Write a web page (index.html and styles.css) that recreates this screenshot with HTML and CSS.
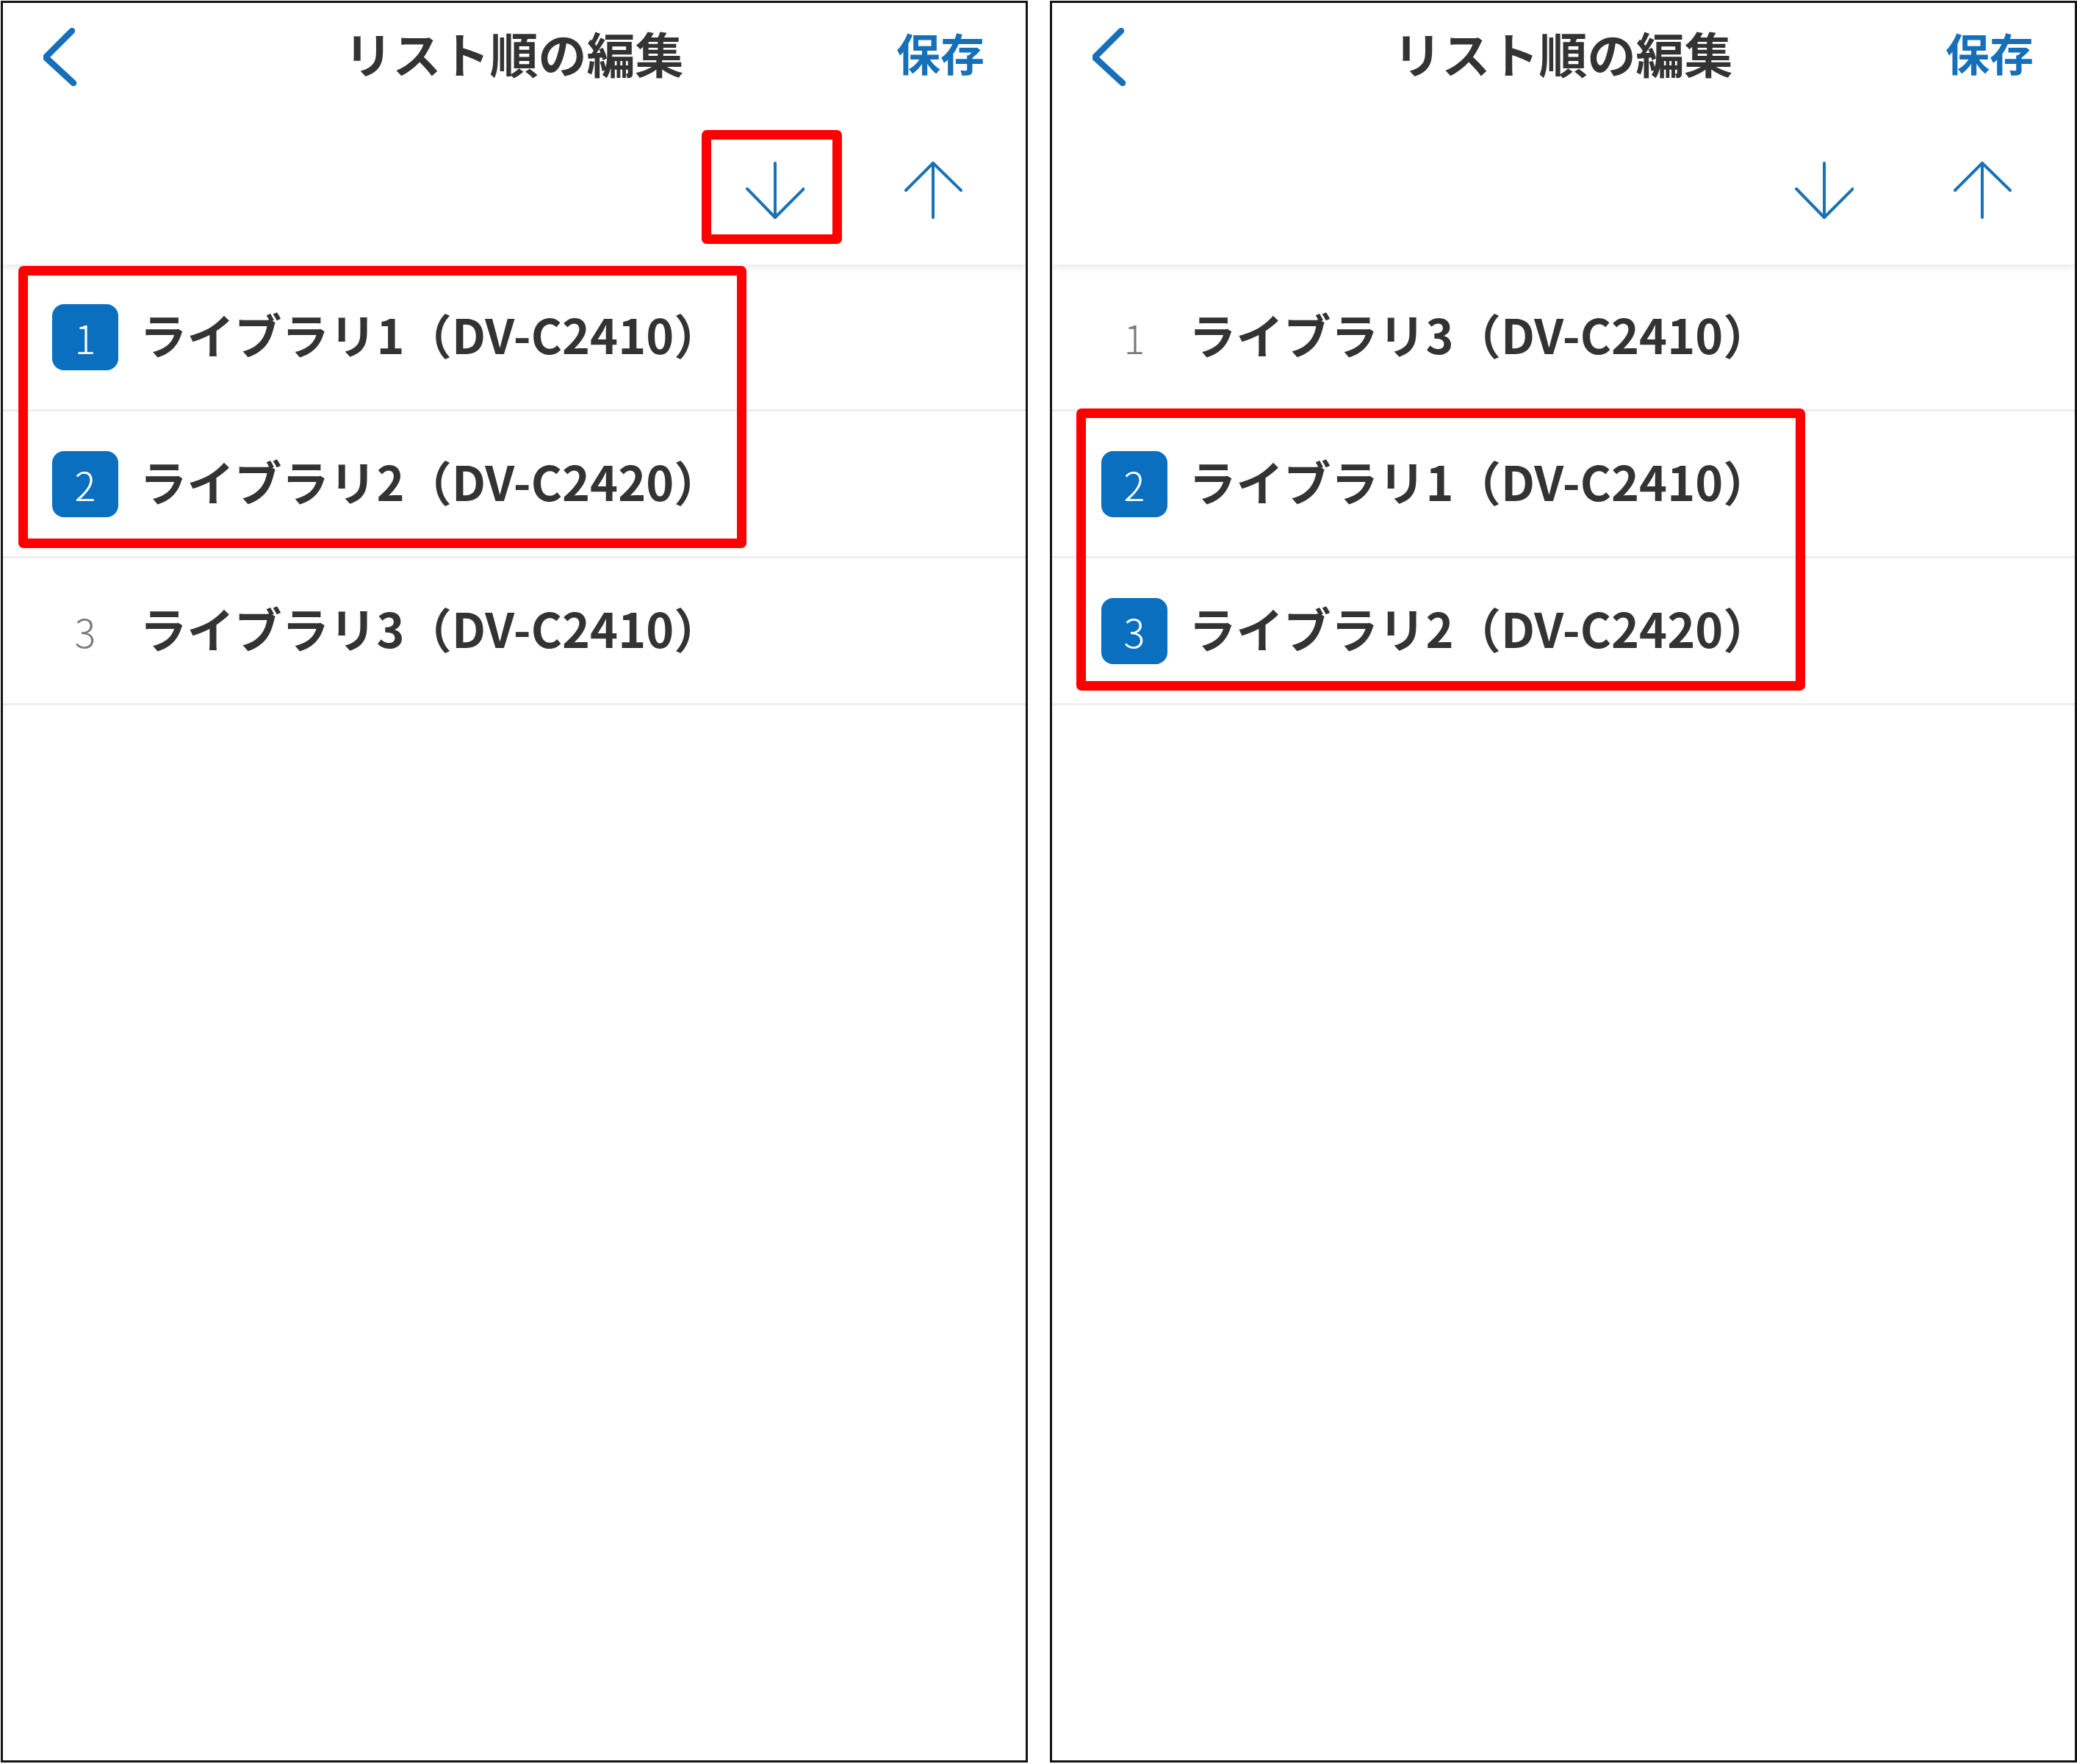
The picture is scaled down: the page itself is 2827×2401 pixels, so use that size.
FILE: index.html
```html
<!DOCTYPE html>
<html lang="ja">
<head>
  <meta charset="UTF-8" />
  <meta name="viewport" content="width=device-width, initial-scale=1.0" />
  <title>リスト順の編集</title>
  <link rel="stylesheet" href="styles.css">
</head>
<body>
  <div class="screens">
    <!-- before: items 1 and 2 selected, tap "down" -->
    <div class="phone">
      <div class="header">
        <div class="nav">
          <svg class="back" width="46" height="80" viewBox="0 0 46 80">
            <polyline points="39,4 3,40 41,75" />
          </svg>
          <div class="title">リスト順の編集</div>
          <div class="save">保存</div>
        </div>
        <div class="toolbar">
          <svg class="arrow" width="80" height="80" viewBox="0 0 80 80">
            <line x1="40" y1="2" x2="40" y2="76" />
            <polyline points="2,37 40,76 79,37" />
          </svg>
          <svg class="arrow" width="80" height="80" viewBox="0 0 80 80">
            <line x1="40" y1="2" x2="40" y2="76" />
            <polyline points="3,39 40,2 78,39" />
          </svg>
        </div>
      </div>
      <ul class="list">
        <li class="row"><span class="num selected">1</span><span class="name">ライブラリ1（DV-C2410）</span></li>
        <li class="row"><span class="num selected">2</span><span class="name">ライブラリ2（DV-C2420）</span></li>
        <li class="row"><span class="num">3</span><span class="name">ライブラリ3（DV-C2410）</span></li>
      </ul>
      <div class="mark mark-down"></div>
      <div class="mark mark-list-before"></div>
    </div>

    <!-- after: selected items moved down -->
    <div class="phone">
      <div class="header">
        <div class="nav">
          <svg class="back" width="46" height="80" viewBox="0 0 46 80">
            <polyline points="39,4 3,40 41,75" />
          </svg>
          <div class="title">リスト順の編集</div>
          <div class="save">保存</div>
        </div>
        <div class="toolbar">
          <svg class="arrow" width="80" height="80" viewBox="0 0 80 80">
            <line x1="40" y1="2" x2="40" y2="76" />
            <polyline points="2,37 40,76 79,37" />
          </svg>
          <svg class="arrow" width="80" height="80" viewBox="0 0 80 80">
            <line x1="40" y1="2" x2="40" y2="76" />
            <polyline points="3,39 40,2 78,39" />
          </svg>
        </div>
      </div>
      <ul class="list">
        <li class="row"><span class="num">1</span><span class="name">ライブラリ3（DV-C2410）</span></li>
        <li class="row"><span class="num selected">2</span><span class="name">ライブラリ1（DV-C2410）</span></li>
        <li class="row"><span class="num selected">3</span><span class="name">ライブラリ2（DV-C2420）</span></li>
      </ul>
      <div class="mark mark-list-after"></div>
    </div>
  </div>
</body>
</html>
```

FILE: styles.css
```css
body {
  margin: 0;
  padding: 1px 0 0 1px;
  background: #fff;
  font-family: "Noto Sans CJK JP", "Noto Sans", sans-serif;
  color: #333;
}

.screens {
  display: flex;
  gap: 30px;
}

.phone {
  position: relative;
  box-sizing: border-box;
  width: 1398px;
  height: 2398px;
  border: 3px solid #151515;
  background: #fff;
  overflow: hidden;
}

.header {
  position: relative;
  z-index: 1;
  height: 356px;
  background: #fff;
  box-shadow: 0 4px 10px rgba(0, 0, 0, 0.09);
}

.nav {
  display: grid;
  grid-template-columns: 1fr auto 1fr;
  align-items: center;
  height: 148px;
  padding: 0 56px 0 55px;
}

.back {
  fill: none;
  stroke: #1670b9;
  stroke-width: 8.5;
  stroke-linecap: round;
  stroke-linejoin: round;
}

.title {
  margin-bottom: 14px;
  font-size: 66px;
  font-weight: bold;
  color: #333;
}

.save {
  justify-self: end;
  margin-bottom: 16px;
  font-size: 60px;
  font-weight: bold;
  color: #1670b9;
}

.toolbar {
  display: flex;
  justify-content: flex-end;
  align-items: center;
  gap: 135px;
  height: 200px;
  padding: 8px 86px 0 0;
}

.arrow {
  fill: none;
  stroke: #1a72b6;
  stroke-width: 4;
  stroke-linecap: round;
  stroke-linejoin: round;
}

.list {
  list-style: none;
  margin: 0;
  padding: 0;
}

.row {
  box-sizing: border-box;
  display: flex;
  align-items: center;
  gap: 29px;
  height: 200px;
  padding-left: 67px;
  border-bottom: 3px solid #eeeeee;
}

.num {
  display: flex;
  align-items: center;
  justify-content: center;
  box-sizing: border-box;
  width: 90px;
  height: 90px;
  border-radius: 16px;
  font-size: 54px;
  font-weight: 300;
  color: #7a7a7a;
}

.num.selected {
  background: #0b6fc0;
  color: #fff;
}

.name {
  padding-bottom: 10px;
  font-size: 64.5px;
  font-weight: 600;
  color: #333;
}

/* red annotation frames */
.mark {
  position: absolute;
  z-index: 2;
  box-sizing: border-box;
  border: 13px solid #ff0000;
  border-radius: 7px;
}

.mark-down {
  left: 951px;
  top: 173px;
  width: 191px;
  height: 155px;
}

.mark-list-before {
  left: 21px;
  top: 358px;
  width: 991px;
  height: 384px;
}

.mark-list-after {
  left: 33px;
  top: 552px;
  width: 992px;
  height: 384px;
}
```
